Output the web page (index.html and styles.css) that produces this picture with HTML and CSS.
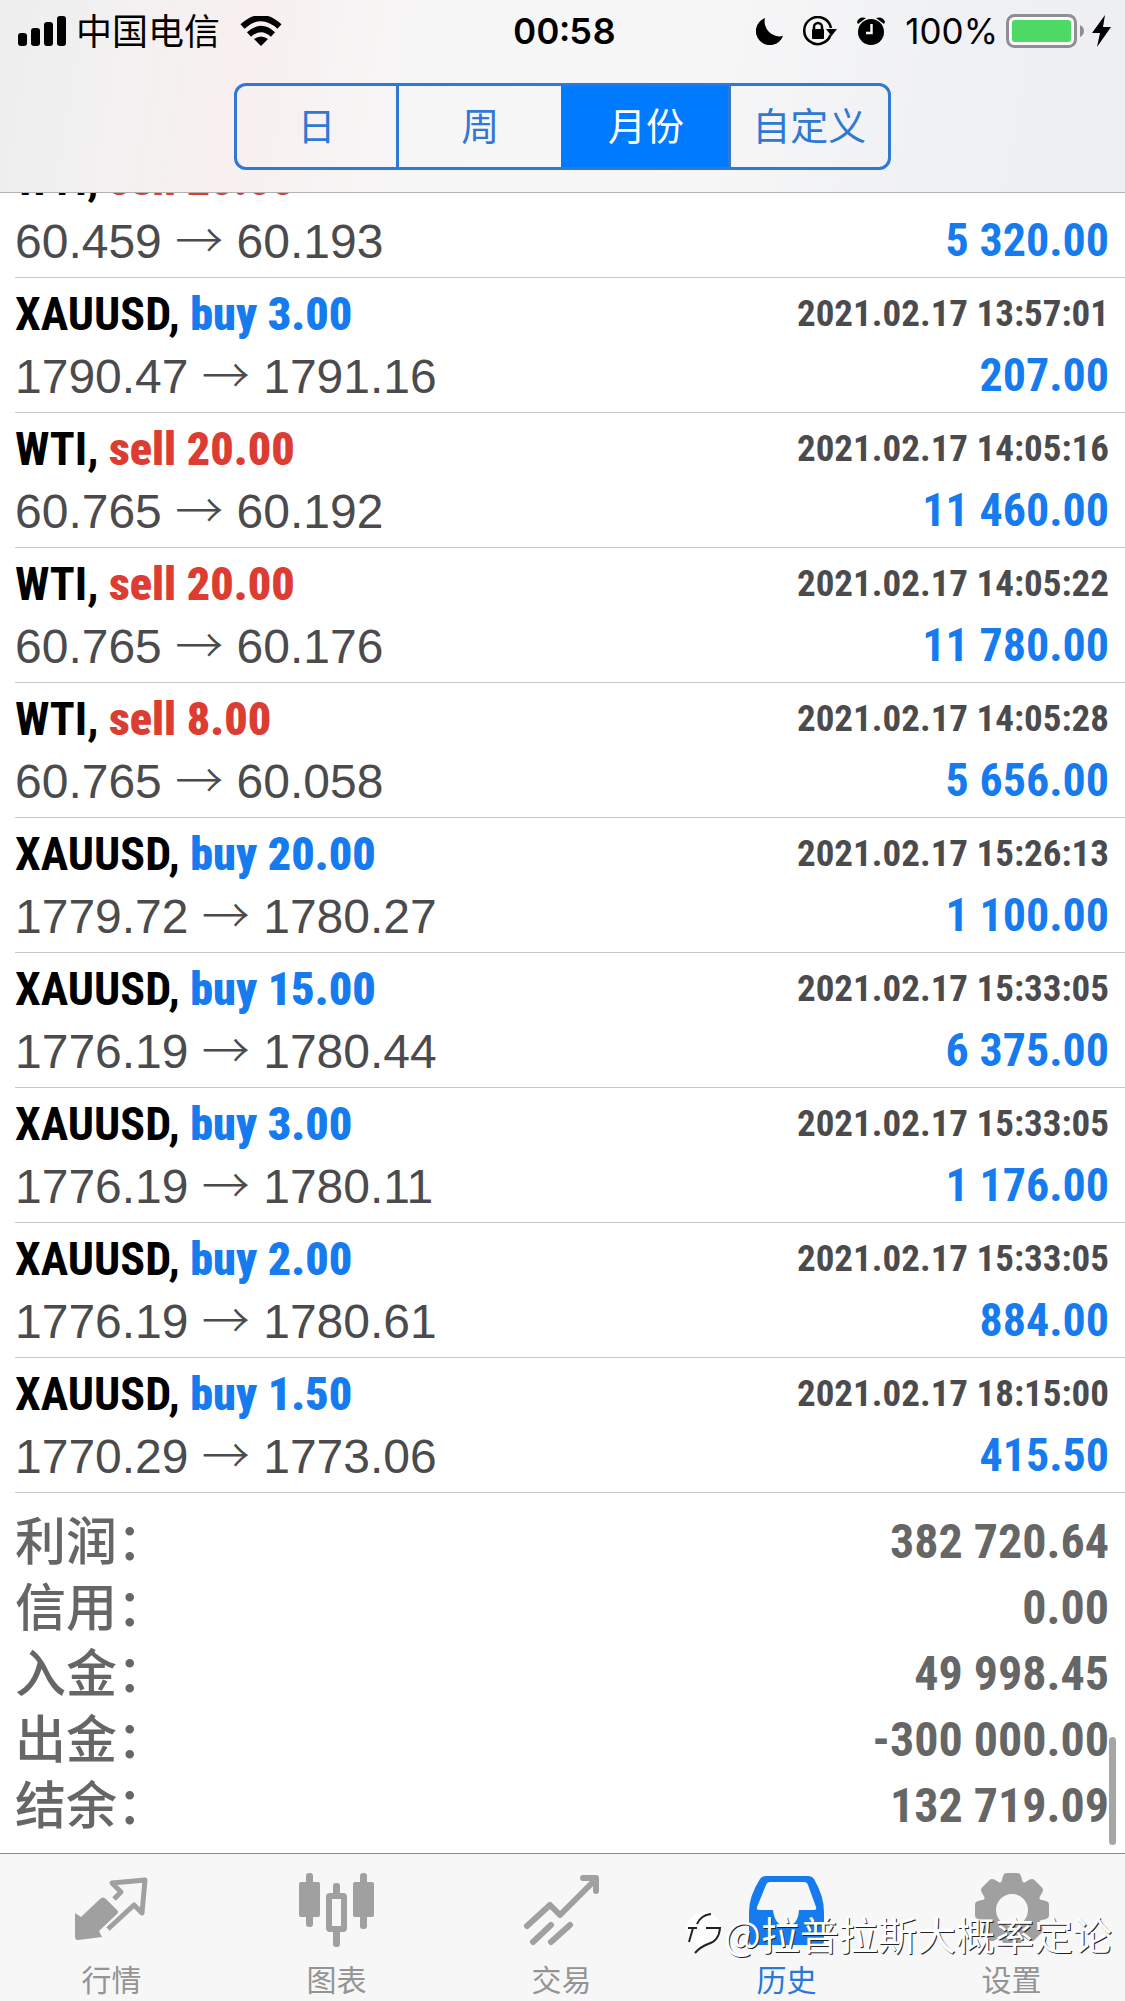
FILE: index.html
```html
<!DOCTYPE html>
<html lang="zh-CN">
<head>
<meta charset="utf-8">
<meta name="viewport" content="width=device-width, initial-scale=1">
<title>历史</title>
<link rel="stylesheet" href="styles.css">
</head>
<body>
<div class="app">
  <header class="header">
    <div class="status">
      <div class="status-left">
        <svg class="signal" width="48" height="30" viewBox="0 0 48 30" aria-hidden="true"><rect x="0" y="17" width="9" height="13" rx="3"/><rect x="13" y="12" width="9" height="18" rx="3"/><rect x="26" y="6" width="9" height="24" rx="3"/><rect x="39" y="0" width="9" height="30" rx="3"/></svg>
        <span class="carrier">中国电信</span>
        <svg class="wifi" width="42" height="30" viewBox="0 0 42 30" aria-hidden="true"><path d="M2.500 10.500Q21-6.500 39.500 10.500" fill="none" stroke="#000" stroke-width="6"/><path d="M9 18.500Q21 7.500 33 18.500" fill="none" stroke="#000" stroke-width="6"/><path d="M14 23Q21 18 28 23L21 30Z"/></svg>
      </div>
      <time class="clock">00:58</time>
      <div class="status-right">
        <svg width="27" height="27" viewBox="0 0 27 27" aria-hidden="true"><path d="M9 0A14 14 0 1 0 27 18A15 15 0 0 1 9 0Z"/></svg>
        <svg width="34" height="30" viewBox="0 0 34 30" aria-hidden="true"><path d="M27.500 19A13.500 13.500 0 1 1 28 12" fill="none" stroke="#000" stroke-width="2.500"/><path d="M23 13h11l-5.500 7z"/><rect x="9" y="13" width="12" height="10" rx="1"/><path d="M11 14v-3a4 4 0 0 1 8 0v3" fill="none" stroke="#000" stroke-width="2.500"/></svg>
        <svg width="28" height="30" viewBox="0 0 28 30" aria-hidden="true"><circle cx="14" cy="16" r="13"/><path d="M0 6Q2 0 9 2L1 8Z"/><path d="M28 6Q26 0 19 2L27 8Z"/><path d="M14.500 8v9H9" fill="none" stroke="#f5f5f6" stroke-width="2.500"/></svg>
        <span class="percent">100%</span>
        <svg class="battery" width="78" height="34" viewBox="0 0 78 34" aria-hidden="true"><rect x="1.500" y="1.500" width="68" height="31" rx="7" fill="#fafafa" stroke="#8f8f93" stroke-width="3"/><rect x="6" y="6" width="59" height="22" rx="3" fill="#4cd964"/><path d="M74 11q4 2 4 6t-4 6z" fill="#8f8f93"/></svg>
        <svg class="bolt" width="19" height="32" viewBox="0 0 19 32" aria-hidden="true"><path d="M13 0L0 18H8L5 32L19 12H11Z"/></svg>
      </div>
    </div>
    <div class="segments">
      <button class="segment" type="button">日</button>
      <button class="segment" type="button">周</button>
      <button class="segment segment-on" type="button">月份</button>
      <button class="segment" type="button">自定义</button>
    </div>
  </header>

  <main class="scroll">
    <ul class="deals">
      <li class="deal"><span class="name">WTI, <b class="sell">sell 20.00</b></span><time class="date">2021.02.17 13:40:12</time><span class="price">60.459 <span class="arrow">→</span> 60.193</span><span class="profit">5 320.00</span></li>
      <li class="deal"><span class="name">XAUUSD, <b class="buy">buy 3.00</b></span><time class="date">2021.02.17 13:57:01</time><span class="price">1790.47 <span class="arrow">→</span> 1791.16</span><span class="profit">207.00</span></li>
      <li class="deal"><span class="name">WTI, <b class="sell">sell 20.00</b></span><time class="date">2021.02.17 14:05:16</time><span class="price">60.765 <span class="arrow">→</span> 60.192</span><span class="profit">11 460.00</span></li>
      <li class="deal"><span class="name">WTI, <b class="sell">sell 20.00</b></span><time class="date">2021.02.17 14:05:22</time><span class="price">60.765 <span class="arrow">→</span> 60.176</span><span class="profit">11 780.00</span></li>
      <li class="deal"><span class="name">WTI, <b class="sell">sell 8.00</b></span><time class="date">2021.02.17 14:05:28</time><span class="price">60.765 <span class="arrow">→</span> 60.058</span><span class="profit">5 656.00</span></li>
      <li class="deal"><span class="name">XAUUSD, <b class="buy">buy 20.00</b></span><time class="date">2021.02.17 15:26:13</time><span class="price">1779.72 <span class="arrow">→</span> 1780.27</span><span class="profit">1 100.00</span></li>
      <li class="deal"><span class="name">XAUUSD, <b class="buy">buy 15.00</b></span><time class="date">2021.02.17 15:33:05</time><span class="price">1776.19 <span class="arrow">→</span> 1780.44</span><span class="profit">6 375.00</span></li>
      <li class="deal"><span class="name">XAUUSD, <b class="buy">buy 3.00</b></span><time class="date">2021.02.17 15:33:05</time><span class="price">1776.19 <span class="arrow">→</span> 1780.11</span><span class="profit">1 176.00</span></li>
      <li class="deal"><span class="name">XAUUSD, <b class="buy">buy 2.00</b></span><time class="date">2021.02.17 15:33:05</time><span class="price">1776.19 <span class="arrow">→</span> 1780.61</span><span class="profit">884.00</span></li>
      <li class="deal"><span class="name">XAUUSD, <b class="buy">buy 1.50</b></span><time class="date">2021.02.17 18:15:00</time><span class="price">1770.29 <span class="arrow">→</span> 1773.06</span><span class="profit">415.50</span></li>
    </ul>
    <dl class="summary">
      <div class="total"><dt>利润：</dt><dd>382 720.64</dd></div>
      <div class="total"><dt>信用：</dt><dd>0.00</dd></div>
      <div class="total"><dt>入金：</dt><dd>49 998.45</dd></div>
      <div class="total"><dt>出金：</dt><dd>-300 000.00</dd></div>
      <div class="total"><dt>结余：</dt><dd>132 719.09</dd></div>
    </dl>
    <div class="thumb"></div>
  </main>

  <nav class="tabs">
    <a class="tab" href="#quotes">
      <svg width="76" height="76" viewBox="0 0 76 76" aria-hidden="true"><path d="M1 41L7 45L26 27Q29 24 32 27L43 38Q45 40 43 42L25 59L28 65L4 68Q1 68 1 65Z" fill="#a0a0a0"/><path d="M40 27L47 20L38 11L71 8L68 41L60 33L34 57" fill="none" stroke="#a0a0a0" stroke-width="5" stroke-linejoin="round"/></svg>
      <span>行情</span>
    </a>
    <a class="tab" href="#charts">
      <svg width="76" height="76" viewBox="0 0 76 76" fill="#a0a0a0" aria-hidden="true"><rect x="0" y="10" width="21" height="35" rx="2"/><rect x="7" y="1" width="7" height="54" rx="3"/><rect x="54" y="10" width="21" height="35" rx="2"/><rect x="61" y="1" width="7" height="56" rx="3"/><rect x="34" y="11" width="7" height="14" rx="3"/><rect x="34" y="55" width="7" height="20" rx="3"/><rect x="30" y="24" width="15" height="33" rx="1" fill="none" stroke="#a0a0a0" stroke-width="6"/></svg>
      <span>图表</span>
    </a>
    <a class="tab" href="#trade">
      <svg width="76" height="76" viewBox="0 0 76 76" fill="none" stroke="#a0a0a0" stroke-width="6" stroke-linecap="round" stroke-linejoin="round" aria-hidden="true"><path d="M3 54L26 33L36 43L72 7M59 6H72V19M9 70L27 53M27 70L46 53"/></svg>
      <span>交易</span>
    </a>
    <a class="tab tab-on" href="#history">
      <svg width="76" height="76" viewBox="0 0 76 76" aria-hidden="true"><path fill="#167bee" fill-rule="evenodd" d="M17 4H59Q63 4 65 7Q75 24 75 40V69Q75 73 71 73H4Q0 73 0 69V40Q0 24 11 7Q13 4 17 4ZM21 10Q18 10 17 13L8 35Q7 38 10 38H24Q26 54 37 54Q49 54 50 38H65Q68 38 67 35L59 13Q58 10 55 10Z"/></svg>
      <span>历史</span>
    </a>
    <a class="tab" href="#settings">
      <svg width="76" height="76" viewBox="0 0 76 76" aria-hidden="true"><g fill="#a0a0a0"><path fill-rule="evenodd" d="M38 8A30 30 0 1 0 38 68A30 30 0 1 0 38 8ZM38 22A16 16 0 1 1 38 54A16 16 0 1 1 38 22Z"/><g id="teeth"><path d="M32 1H44Q46 1 47 4L49 12H27L29 4Q30 1 32 1Z"/><path d="M32 75H44Q46 75 47 72L49 64H27L29 72Q30 75 32 75Z"/><path d="M1 32V44Q1 46 4 47L12 49V27L4 29Q1 30 1 32Z"/><path d="M75 32V44Q75 46 72 47L64 49V27L72 29Q75 30 75 32Z"/></g><use href="#teeth" transform="rotate(45 38 38)"/></g></svg>
      <span>设置</span>
    </a>
  </nav>

  <div class="mark">
    <svg width="36" height="46" viewBox="0 0 36 46" aria-hidden="true"><circle cx="18" cy="19" r="17" fill="#fff"/><path d="M1 16L9 14Q14 4 23 2L33 12V22Q30 34 20 36L9 43L14 32L4 32Z" fill="#fff"/><path d="M2 18H11M7 18L3 32M11 14Q15 5 25 4M20 18H34Q33 31 22 34Q14 37 9 43" fill="none" stroke="#222" stroke-width="2"/></svg>
    <span>@拉普拉斯大概率定论</span>
  </div>
</div>
</body>
</html>
```
FILE: styles.css
```css
* { box-sizing: border-box; }

body {
  margin: 0;
  background: #fff;
  font-family: "Liberation Sans", "Noto Sans CJK SC", sans-serif;
}

.app {
  position: relative;
  display: flex;
  flex-direction: column;
  height: 100vh;
  overflow: hidden;
}

/* Status bar and period switch */
.header {
  position: relative;
  z-index: 1;
  flex: none;
  padding-bottom: 22px;
  border-bottom: 1px solid #b2b2b2;
  background: linear-gradient(100deg, #eeeeee 0%, #f3f1f1 12%, #f8eff0 22%, #f7f6f6 36%, #f7f7f7 60%, #f0f1f4 82%, #eeeff3 100%);
}

.status {
  display: grid;
  grid-template-columns: 1fr auto 1fr;
  align-items: center;
  height: 62px;
  margin-bottom: 21px;
  padding: 0 14px 0 18px;
}

.status-left,
.status-right {
  display: flex;
  align-items: center;
}

.status-left { gap: 10px; }
.status-right { justify-content: flex-end; gap: 20px; }

.carrier {
  padding-bottom: 4px;
  font: 36px/40px "Noto Sans CJK SC", sans-serif;
}

.wifi { margin-left: 10px; }

.clock {
  font: 600 36px/40px Inter, sans-serif;
  font-feature-settings: "tnum";
}

.percent {
  font: 35px/40px Inter, sans-serif;
}

.battery { margin-left: -12px; }
.bolt { margin-left: -12px; }

.segments {
  display: grid;
  grid-template-columns: 159fr 165fr 166fr 160fr;
  width: 58.4%;
  height: 87px;
  margin: 0 auto;
  overflow: hidden;
  border: 3px solid #2f78d3;
  border-radius: 12px;
}

.segment {
  padding: 0 0 5px;
  border: 0;
  border-left: 3px solid #2f78d3;
  background: transparent;
  color: #2f78d3;
  font: 38px/56px "Noto Sans CJK SC", sans-serif;
}

.segment:first-child { border-left: 0; }

.segment-on {
  border-color: #007aff;
  background: #007aff;
  color: #fff;
}

/* The history rests at its end, older deals slide under the header */
.scroll {
  position: relative;
  display: flex;
  flex: 1;
  flex-direction: column;
  justify-content: flex-end;
  min-height: 0;
}

.deals {
  flex: none;
  margin: 0;
  padding: 0 0 0 15px;
  list-style: none;
}

.deal {
  display: grid;
  grid-template-columns: 1fr auto;
  grid-template-rows: 72px 50px;
  align-items: center;
  height: 135px;
  padding-right: 16px;
  border-bottom: 1px solid #c8c7cc;
  line-height: 50px;
}

.name,
.profit,
.date,
.total dd {
  font-family: "Roboto Condensed", "Liberation Sans", sans-serif;
  font-weight: 700;
}

.name { font-size: 46px; color: #000; }
.sell { color: #dc3c31; }
.buy { color: #167bee; }
.date { font-size: 37px; color: #4b4b4d; }
.price { font-size: 48px; color: #4b4b4d; }
.arrow { font-family: "Noto Sans CJK SC", sans-serif; font-weight: 300; line-height: 1; }
.profit { font-size: 46px; color: #167bee; text-align: right; }

.summary {
  flex: none;
  margin: 0;
  padding: 15px 16px 15px 15px;
}

.total {
  display: flex;
  justify-content: space-between;
  height: 66px;
  color: #666;
  line-height: 68px;
}

.total dt {
  font: 500 51px/60px "Noto Sans CJK SC", sans-serif;
}

.total dd {
  margin: 0;
  font-size: 48px;
}

.thumb {
  position: absolute;
  right: 9px;
  bottom: 8px;
  width: 7px;
  height: 108px;
  border-radius: 4px;
  background: #a6a6a6;
}

/* Tab bar */
.tabs {
  display: grid;
  flex: none;
  grid-template-columns: repeat(5, 1fr);
  border-top: 1px solid #8c8c8c;
  background: #f7f7f7;
}

.tab {
  display: flex;
  flex-direction: column;
  align-items: center;
  gap: 10px;
  padding: 18px 2px 3px 0;
  color: #949494;
  font: 30px/40px "Noto Sans CJK SC", sans-serif;
  text-decoration: none;
}

.tab-on { color: #2878d8; }

.mark {
  position: absolute;
  right: 13px;
  bottom: 40px;
  display: flex;
  align-items: center;
  gap: 2px;
  color: #fff;
  font: 39px/56px "Noto Sans CJK SC", sans-serif;
  text-shadow: 1px 1px 0 #222;
}
```
